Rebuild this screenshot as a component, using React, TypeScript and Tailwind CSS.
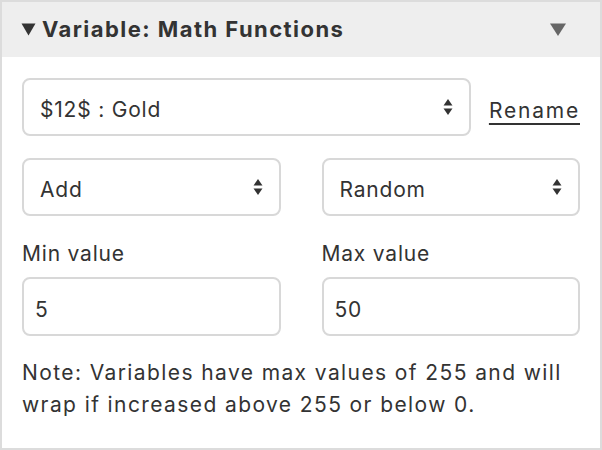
const Arrows = () => (
  <svg width="10" height="18" viewBox="0 0 10 18" className="shrink-0">
    <path d="M5 1 L9.5 7.5 H0.5 Z" fill="#333" />
    <path d="M5 17 L9.5 10.5 H0.5 Z" fill="#333" />
  </svg>
);

const Select = ({ value }: { value: string }) => (
  <div className="flex items-center justify-between h-[58px] border-2 border-[#d8d8d8] rounded-[8px] pl-[16px] pr-[16px] bg-white">
    <span className="pt-[5px]">{value}</span>
    <Arrows />
  </div>
);

const Input = ({ value }: { value: string }) => (
  <div className="flex items-center h-[59px] border-2 border-[#d8d8d8] rounded-[8px] pl-[11px] pt-[7px] bg-white">
    {value}
  </div>
);

export default function App() {
  return (
    <div
      className="w-[602px] h-[450px] bg-white border-2 border-[#dcdcdc] text-[#333] text-[21px] tracking-[0.8px] flex flex-col"
      style={{ fontFamily: "Inter, 'Noto Sans', sans-serif" }}
    >
      <div className="h-[55px] bg-[#eeeeee] flex items-center justify-between pl-[19px] pr-[34px]">
        <div className="flex items-center gap-[6px] font-bold text-[22px] tracking-[1.45px]">
          <svg width="15" height="13" viewBox="0 0 15 13">
            <path d="M0.5 0.5 H14.5 L7.5 12.5 Z" fill="#333" />
          </svg>
          <span>Variable: Math Functions</span>
        </div>
        <svg width="16" height="13" viewBox="0 0 16 13">
          <path d="M0 0.5 H16 L8 13 Z" fill="#666" />
        </svg>
      </div>
      <div className="px-[20px] pt-[21px] flex flex-col">
        <div className="flex items-center gap-[18px]">
          <div className="flex-1">
            <Select value="$12$ : Gold" />
          </div>
          <span className="pt-[7px] underline underline-offset-[5px] decoration-[2px] tracking-[1.8px]">Rename</span>
        </div>
        <div className="grid grid-cols-2 gap-x-[41px] mt-[22px]">
          <Select value="Add" />
          <Select value="Random" />
          <div className="mt-[24px] mb-[9px] leading-[28px]">Min value</div>
          <div className="mt-[24px] mb-[9px] leading-[28px]">Max value</div>
          <Input value="5" />
          <Input value="50" />
        </div>
        <p className="mt-[21px] leading-[32px] tracking-[1.4px]">
          Note: Variables have max values of 255 and will wrap if increased above 255 or below 0.
        </p>
      </div>
    </div>
  );
}
